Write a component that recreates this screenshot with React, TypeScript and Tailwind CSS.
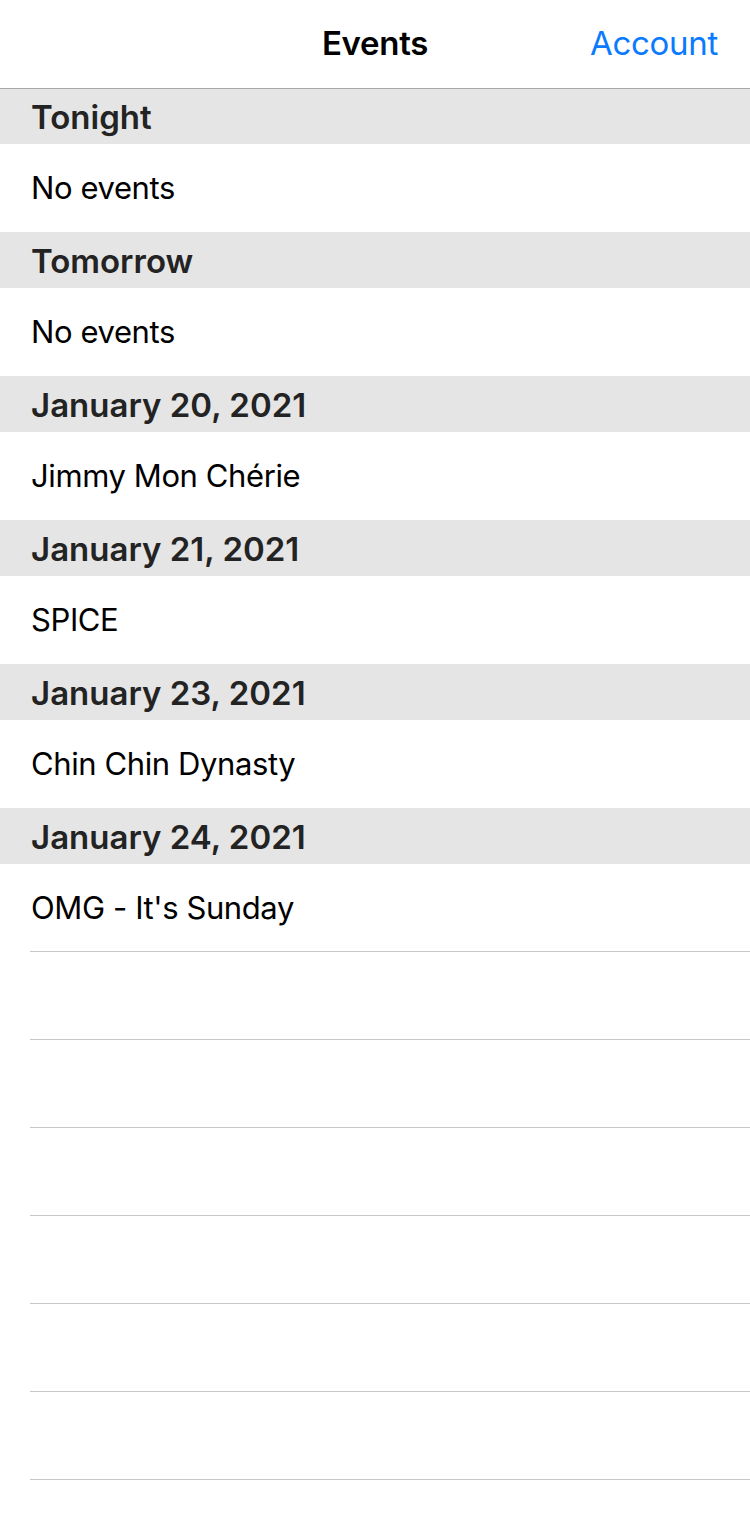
import React from "react";

const sections: { title: string; item: string }[] = [
  { title: "Tonight", item: "No events" },
  { title: "Tomorrow", item: "No events" },
  { title: "January 20, 2021", item: "Jimmy Mon Chérie" },
  { title: "January 21, 2021", item: "SPICE" },
  { title: "January 23, 2021", item: "Chin Chin Dynasty" },
  { title: "January 24, 2021", item: "OMG - It's Sunday" },
];

export default function App() {
  const font = { fontFamily: "Inter, 'Noto Sans', 'Liberation Sans', sans-serif" };
  return (
    <div className="w-[750px] h-[1536px] bg-white overflow-hidden" style={font}>
      <div className="h-[88px] relative flex items-center justify-center border-b border-[#a9a9a9] box-content">
        <div className="text-[33px] font-semibold text-black tracking-[-0.3px]">Events</div>
        <div className="absolute right-[32px] top-0 h-[88px] flex items-center text-[33px] text-[#0a7aff] tracking-[-0.3px]">
          Account
        </div>
      </div>
      {sections.map((s, i) => (
        <div key={i}>
          <div className={`${i === 0 ? "h-[55px]" : "h-[56px]"} bg-[#e5e5e5] flex items-center pl-[31px] pt-[3px] text-[33px] font-semibold text-[#232323] tracking-[0px]`}>
            {s.title}
          </div>
          <div className="h-[88px] flex items-center pl-[31px] text-[31px] text-black tracking-[-0.4px]">
            {s.item}
          </div>
        </div>
      ))}
      <div className="ml-[30px] -mt-[1px]">
        {Array.from({ length: 7 }).map((_, i) => (
          <div key={i} className="h-[88px] border-t border-[#c8c8c8] box-border" />
        ))}
      </div>
    </div>
  );
}
